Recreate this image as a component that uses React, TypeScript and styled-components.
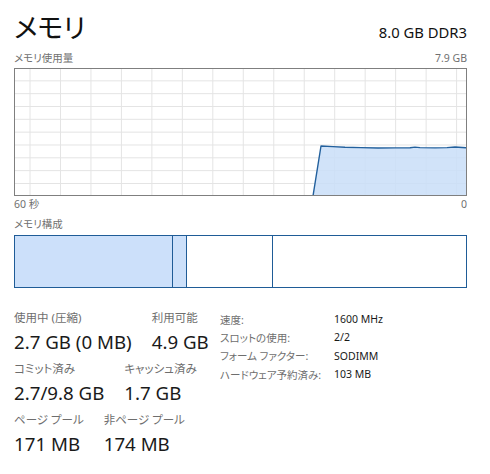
import React from "react";
import styled, { createGlobalStyle } from "styled-components";

const Global = createGlobalStyle`
  html, body { margin: 0; padding: 0; background: #ffffff; }
  body {
    font-family: "Noto Sans", "Noto Sans CJK JP", sans-serif;
    font-feature-settings: "palt";
    color: #1a1a1a;
  }
`;

const Page = styled.div`
  width: 490px;
  height: 474px;
  box-sizing: border-box;
  padding: 10px 23px 0 14px;
  overflow: hidden;
`;

const Header = styled.div`
  display: flex;
  justify-content: space-between;
  align-items: flex-end;
  height: 34px;
`;

const Title = styled.div`
  font-family: "Noto Sans CJK JP", sans-serif;
  font-feature-settings: "palt";
  font-size: 27px;
  line-height: 34px;
  font-weight: 400;
  color: #111;
`;

const Spec = styled.div`
  font-size: 14.8px;
  line-height: 20px;
  color: #111;
  margin-bottom: 2px;
`;

const CaptionRow = styled.div<{ $mt?: number }>`
  display: flex;
  justify-content: space-between;
  font-size: 10.5px;
  line-height: 14px;
  color: #707070;
  margin-top: ${(p) => p.$mt ?? 0}px;
`;

const GraphBox = styled.div`
  margin-top: 3px;
  height: 128px;
  box-sizing: border-box;
  border: 1px solid #7f7f7f;
  background: #fff;
  svg { display: block; }
`;

const CompBar = styled.div`
  margin-top: 4px;
  height: 53px;
  box-sizing: border-box;
  border: 1.5px solid #1f5c97;
  display: flex;
`;

const Segment = styled.div<{ $w?: number; $filled?: boolean; $first?: boolean }>`
  ${(p) => (p.$w ? `width: ${p.$w}px; flex: none;` : "flex: 1;")}
  background: ${(p) => (p.$filled ? "#cce0fa" : "#ffffff")};
  border-left: ${(p) => (p.$first ? "none" : "1.5px solid #1f5c97")};
`;

const Stats = styled.div`
  display: grid;
  grid-template-columns: 206px 1fr;
  margin-top: 22px;
`;

const Groups = styled.div`
  display: flex;
  flex-direction: column;
`;

const GroupRow = styled.div`
  display: flex;
  gap: 20px;
  margin-bottom: 7px;
`;

const Stat = styled.div`
  display: flex;
  flex-direction: column;
`;

const StatLabel = styled.div`
  font-size: 11.5px;
  line-height: 16px;
  color: #6e6e6e;
  white-space: nowrap;
`;

const StatValue = styled.div`
  font-size: 18.7px;
  line-height: 24px;
  margin-top: 4px;
  color: #1a1a1a;
  white-space: nowrap;
`;

const Props = styled.div`
  display: grid;
  grid-template-columns: 114px auto;
  grid-auto-rows: 18.3px;
  align-items: center;
`;

const PropLabel = styled.div`
  font-size: 10.5px;
  color: #6e6e6e;
  white-space: nowrap;
`;

const PropValue = styled.div`
  font-size: 10.5px;
  color: #1a1a1a;
  white-space: nowrap;
`;

const W = 451;
const H = 126;

const Graph: React.FC = () => {
  const vx: number[] = [];
  for (let i = 0; i < 15; i++) vx.push(15 + i * 30.47);
  const hy: number[] = [];
  for (let i = 1; i < 10; i++) hy.push(-1 + i * 12.83);
  const pts: [number, number][] = [
    [298, 127],
    [306, 77],
    [318, 77.6],
    [330, 78.3],
    [346, 78.6],
    [363, 79],
    [380, 78.9],
    [395, 78.8],
    [400, 78.1],
    [405, 78.6],
    [420, 78.9],
    [432, 78.6],
    [440, 78],
    [451, 78.8],
    [451, 127],
  ];
  const d = "M" + pts.map((p) => p.join(",")).join(" L") + " Z";
  const line = "M" + pts.slice(0, -1).map((p) => p.join(",")).join(" L");
  return (
    <svg width={W} height={H} viewBox={`0 0 ${W} ${H}`}>
      {vx.map((x) => (
        <line key={"v" + x} x1={x} y1={0} x2={x} y2={H} stroke="#e4e4e4" strokeWidth={1} />
      ))}
      {hy.map((y) => (
        <line key={"h" + y} x1={0} y1={y} x2={W} y2={y} stroke="#e4e4e4" strokeWidth={1} />
      ))}
      <path d={d} fill="#c9def8" fillOpacity={0.85} />
      <path d={line} fill="none" stroke="#22609d" strokeWidth={1.4} strokeLinejoin="round" />
    </svg>
  );
};

const groups = [
  [
    { label: "使用中 (圧縮)", value: "2.7 GB (0 MB)" },
    { label: "利用可能", value: "4.9 GB" },
  ],
  [
    { label: "コミット済み", value: "2.7/9.8 GB" },
    { label: "キャッシュ済み", value: "1.7 GB" },
  ],
  [
    { label: "ページ プール", value: "171 MB" },
    { label: "非ページ プール", value: "174 MB" },
  ],
];

const props = [
  ["速度:", "1600 MHz"],
  ["スロットの使用:", "2/2"],
  ["フォーム ファクター:", "SODIMM"],
  ["ハードウェア予約済み:", "103 MB"],
];

export default function App() {
  return (
    <Page>
      <Global />
      <Header>
        <Title>メモリ</Title>
        <Spec>8.0 GB DDR3</Spec>
      </Header>
      <CaptionRow $mt={7}>
        <span>メモリ使用量</span>
        <span>7.9 GB</span>
      </CaptionRow>
      <GraphBox>
        <Graph />
      </GraphBox>
      <CaptionRow $mt={1}>
        <span>60 秒</span>
        <span>0</span>
      </CaptionRow>
      <CaptionRow $mt={6}>
        <span>メモリ構成</span>
      </CaptionRow>
      <CompBar>
        <Segment $first $filled $w={157} />
        <Segment $filled $w={13} />
        <Segment $w={85} />
        <Segment />
      </CompBar>
      <Stats>
        <Groups>
          {groups.map((g, i) => (
            <GroupRow key={i}>
              {g.map((s) => (
                <Stat key={s.label}>
                  <StatLabel>{s.label}</StatLabel>
                  <StatValue>{s.value}</StatValue>
                </Stat>
              ))}
            </GroupRow>
          ))}
        </Groups>
        <Props>
          {props.map(([l, v]) => (
            <React.Fragment key={l}>
              <PropLabel>{l}</PropLabel>
              <PropValue>{v}</PropValue>
            </React.Fragment>
          ))}
        </Props>
      </Stats>
    </Page>
  );
}
